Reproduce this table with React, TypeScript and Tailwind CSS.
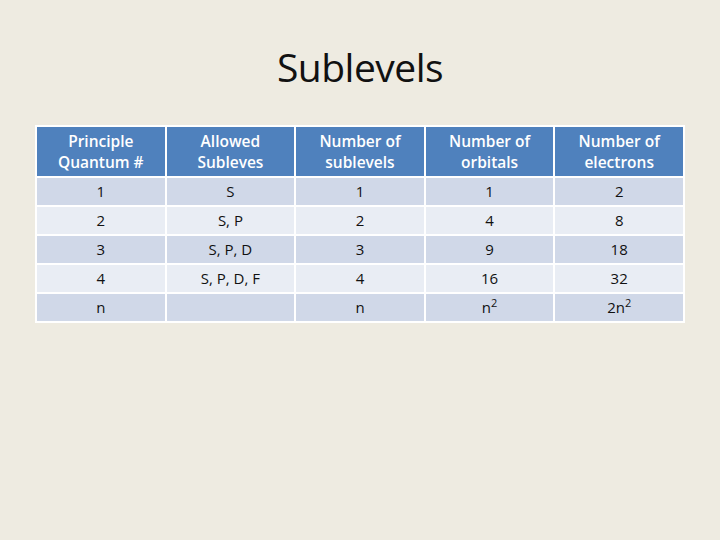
const header = [
  ['Principle', 'Quantum #'],
  ['Allowed', 'Subleves'],
  ['Number of', 'sublevels'],
  ['Number of', 'orbitals'],
  ['Number of', 'electrons'],
];

const rows: React.ReactNode[][] = [
  ['1', 'S', '1', '1', '2'],
  ['2', 'S, P', '2', '4', '8'],
  ['3', 'S, P, D', '3', '9', '18'],
  ['4', 'S, P, D, F', '4', '16', '32'],
  [
    'n',
    '',
    'n',
    <>
      n<sup className="text-[11px]">2</sup>
    </>,
    <>
      2n<sup className="text-[11px]">2</sup>
    </>,
  ],
];

export default function App() {
  return (
    <div
      className="w-[720px] h-[540px] bg-[#eeebe1] text-[#111] flex flex-col items-center"
      style={{ fontFamily: '"Open Sans", Lato, sans-serif' }}
    >
      <h1 className="mt-[41px] text-[39px] leading-[52px] tracking-[-0.5px]">Sublevels</h1>
      <table className="mt-[32px] w-[650px] border-collapse table-fixed text-[15px]">
        <thead>
          <tr className="h-[51px] bg-[#4f81bd] text-white">
            {header.map((h, i) => (
              <th key={i} className="border-2 border-white font-semibold text-[15.5px] leading-[21px] text-center">
                {h[0]}
                <br />
                {h[1]}
              </th>
            ))}
          </tr>
        </thead>
        <tbody>
          {rows.map((r, i) => (
            <tr key={i} className={`h-[29px] ${i % 2 === 0 ? 'bg-[#d0d8e8]' : 'bg-[#e9edf4]'}`}>
              {r.map((c, j) => (
                <td key={j} className="border-2 border-white text-center p-0 pb-[2px] leading-[20px]">
                  {c}
                </td>
              ))}
            </tr>
          ))}
        </tbody>
      </table>
    </div>
  );
}
